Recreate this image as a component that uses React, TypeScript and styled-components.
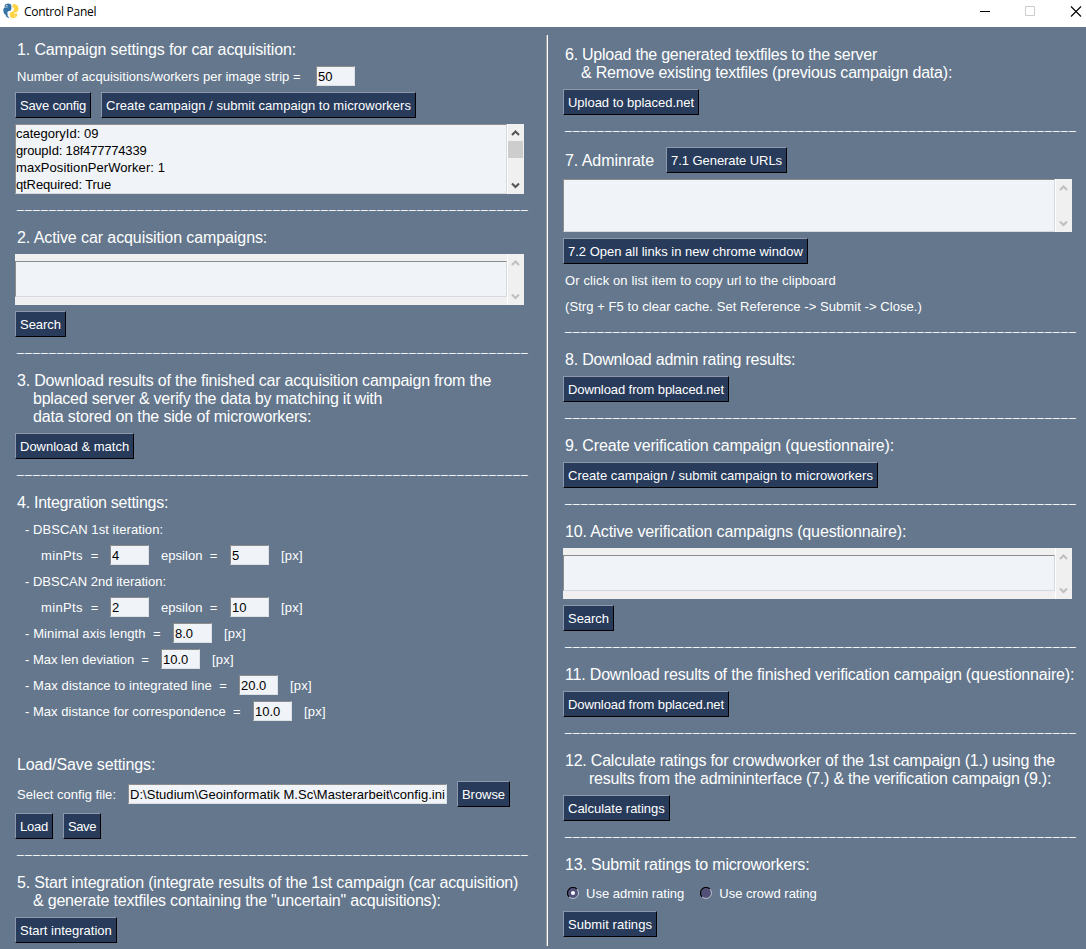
import type { ReactNode } from "react";
import styled, { createGlobalStyle } from "styled-components";

const GlobalStyle = createGlobalStyle`
  *, *::before, *::after { box-sizing: border-box; }
  body {
    margin: 0;
    overflow: hidden;
    font: 13px/16px "Liberation Sans", Arial, sans-serif;
    color: #fff;
    background: #64778d;
  }
`;

const Window = styled.div`
  display: flex;
  flex-direction: column;
  width: 1086px;
  height: 949px;
  background: #64778d;
`;

const TitleBar = styled.header`
  display: flex;
  align-items: flex-start;
  flex: none;
  height: 27px;
  padding: 3px 4px 0 3px;
  background: #fff;
  color: #000;
`;

const Title = styled.h1`
  flex: 1;
  margin: 0 0 0 5px;
  font: 400 12px/18px "Open Sans", "Noto Sans", sans-serif;
  letter-spacing: -0.26px;
`;

const WindowControls = styled.div`
  display: flex;
  gap: 35px;
  padding-top: 3px;
`;

const Body = styled.main`
  display: flex;
  flex: 1;
  align-items: flex-start;
  padding-left: 15px;
`;

const LeftColumn = styled.div`
  width: 531px;
  padding-top: 13px;
`;

const Divider = styled.div`
  width: 2px;
  height: 911px;
  margin-top: 8px;
  border-left: 1px solid #a0a0a0;
  background: #fff;
`;

const RightColumn = styled.div`
  flex: 1;
  padding: 18px 0 0 15px;
`;

const Tracked = styled.span<{ $track?: number }>`
  letter-spacing: ${(p) => p.$track ?? 0}px;
  white-space: pre;
`;

const Heading = styled.h2<{ $inline?: boolean }>`
  display: flex;
  flex-direction: column;
  margin: ${(p) => (p.$inline ? "0" : "0 0 7px")};
  padding: ${(p) => (p.$inline ? "2px" : "1px")} 0 0 2px;
  font-size: 16px;
  font-weight: 400;
  line-height: 18px;
`;

const HeadingLine = styled(Tracked)<{ $indent?: number }>`
  padding-left: ${(p) => p.$indent ?? 0}px;
`;

const Row = styled.div<{ $gap?: number; $mt?: number; $mb?: number; $h?: number }>`
  display: flex;
  align-items: center;
  gap: ${(p) => p.$gap ?? 10}px;
  height: ${(p) => p.$h ?? 26}px;
  margin-top: ${(p) => p.$mt ?? 0}px;
  margin-bottom: ${(p) => p.$mb ?? 0}px;
`;

const FieldRow = styled(Row)<{ $indent: number }>`
  gap: 12px;
  padding-left: ${(p) => p.$indent}px;
`;

const Label = styled(Tracked)<{ $w?: number }>`
  width: ${(p) => (p.$w ? `${p.$w}px` : "auto")};
  padding-top: 2px;
`;

const Field = styled.input<{ $w?: number; $track?: number }>`
  width: ${(p) => p.$w ?? 39}px;
  height: 20px;
  padding: 0 0 0 1px;
  border: 1px solid;
  border-color: #8c8c8c #dde1e6 #dde1e6 #8c8c8c;
  border-radius: 0;
  outline: none;
  background: #f0f3f7;
  color: #000;
  font: 13px/16px "Liberation Sans", Arial, sans-serif;
  letter-spacing: ${(p) => p.$track ?? 0}px;
`;

const PushButton = styled.button<{ $w: number; $track?: number }>`
  display: block;
  flex: none;
  width: ${(p) => p.$w}px;
  height: 26px;
  padding: 2px 0 0 4px;
  border: 1px solid;
  border-color: #8d99ab #000 #000 #8d99ab;
  border-radius: 0;
  background: #283b5b;
  color: #fff;
  font: 13px/16px "Liberation Sans", Arial, sans-serif;
  letter-spacing: ${(p) => p.$track ?? 0}px;
  text-align: left;
  white-space: nowrap;
`;

const Rule = styled.div`
  height: 34px;
  padding: 2px 0 0 2px;
  overflow: hidden;
  font-size: 12px;
  line-height: 16px;
  letter-spacing: 1.326px;
  white-space: nowrap;
`;

const ListFrame = styled.div<{ $h: number; $mb: number }>`
  display: flex;
  width: 509px;
  height: ${(p) => p.$h}px;
  margin-bottom: ${(p) => p.$mb}px;
  background: #f0f0f0;
`;

const ListItems = styled.ul<{ $inset?: boolean }>`
  display: flex;
  flex-direction: column;
  flex: 1;
  margin: ${(p) => (p.$inset ? "7px 0 8px" : "0")};
  padding: 0;
  border: 1px solid;
  border-color: #8c8c8c #d6dae0 #d6dae0 #8c8c8c;
  background: #f0f3f7;
  color: #000;
  line-height: 17px;
  list-style: none;
`;

const ScrollTrack = styled.div`
  display: flex;
  flex-direction: column;
  align-items: center;
  justify-content: space-between;
  width: 17px;
  padding: 6px 1px 5px 0;
  border-left: 1px solid #fff;
`;

const ScrollThumb = styled.div`
  width: 15px;
  height: 17px;
  margin: 4px 0 auto;
  background: #cdcdcd;
`;

const Notes = styled.div`
  display: flex;
  flex-direction: column;
  gap: 8px;
  padding: 7px 0 1px 2px;
`;

const RadioLabel = styled.label`
  display: flex;
  align-items: center;
  gap: 7px;
`;

const RadioRow = styled.div`
  display: flex;
  gap: 16px;
  padding: 3px 0 9px 4px;
`;

function Chevron({ down, active }: { down?: boolean; active?: boolean }) {
  return (
    <svg width="9" height="7" viewBox="0 0 9 7" fill="none">
      <path
        d={down ? "M1 1.4 4.5 4.9 8 1.4" : "M1 5.1 4.5 1.6 8 5.1"}
        stroke={active ? "#555" : "#bfbfbf"}
        strokeWidth="2.1"
      />
    </svg>
  );
}

function Radio({ checked }: { checked?: boolean }) {
  return (
    <svg width="12" height="12" viewBox="0 0 12 12">
      <circle cx="6" cy="6" r="5" fill="#525078" />
      <path d="M2.1 9.9A5.5 5.5 0 0 1 9.9 2.1" fill="none" stroke="#000" strokeWidth="1.2" />
      <path d="M9.9 2.1A5.5 5.5 0 0 1 2.1 9.9" fill="none" stroke="#b4bcc8" strokeWidth="1" />
      {checked && <circle cx="6" cy="6" r="2" fill="#fff" />}
    </svg>
  );
}

function Logo() {
  return (
    <svg width="16" height="16" viewBox="0 0 16 16">
      <path
        d="M2.6 1.2Q5 -.2 7.4 1.1Q8.6 2 8.4 4V6Q8.2 7.6 6.6 7.9L5.2 8.3Q4.2 8.7 4.2 10V12.2Q2 12.2 1 10.2Q-.1 7.7.6 5.4Q1.3 4.3 3 4.2H5V3.7H1.6Q1.4 2 2.6 1.2Z"
        fill="#3572a5"
      />
      <circle cx="3.8" cy="2.4" r=".6" fill="#fff" />
      <path
        d="M9.5 1.4Q12.5.3 14.4 2.6Q16 5 15.2 7.6Q14.6 8.9 12.9 9.2L10.8 9.8V10.5H14.4Q14.6 13.2 12.6 14.6Q10.2 15.8 7.8 14.4Q6.5 13.2 6.6 11.5Q6.6 9.4 8.3 8.9L9.8 8.4Q10.9 8 10.9 6.7V4.4H9.5Z"
        fill="#ffd342"
      />
      <path d="M4.2 9.5Q4 13 6.4 14.6Q3.2 15 2.7 12.5Z" fill="#3572a5" />
      <circle cx="11.6" cy="13" r=".6" fill="#fff" />
    </svg>
  );
}

const Separator = () => <Rule>{"_".repeat(64)}</Rule>;

function ListBox({
  height,
  gap = 6,
  inset,
  scrollable,
  children,
}: {
  height: number;
  gap?: number;
  inset?: boolean;
  scrollable?: boolean;
  children?: ReactNode;
}) {
  return (
    <ListFrame $h={height} $mb={gap}>
      <ListItems $inset={inset}>{children}</ListItems>
      <ScrollTrack>
        <Chevron active={scrollable} />
        {scrollable && <ScrollThumb />}
        <Chevron down active={scrollable} />
      </ScrollTrack>
    </ListFrame>
  );
}

interface Setting {
  label: string;
  labelWidth: number;
  track: number;
  value: string;
}

function SettingRow({ indent, fields }: { indent: number; fields: Setting[] }) {
  return (
    <FieldRow $indent={indent}>
      {fields.map((f) => (
        <FieldRow as="span" $indent={0} key={f.label}>
          <Label $w={f.labelWidth} $track={f.track}>{f.label}</Label>
          <Field defaultValue={f.value} />
        </FieldRow>
      ))}
      <Label $track={0.25}>[px]</Label>
    </FieldRow>
  );
}

const minPts = (value: string): Setting => ({ label: "minPts  =", labelWidth: 57, track: 0.36, value });
const epsilon = (value: string): Setting => ({ label: "epsilon  =", labelWidth: 57, track: 0.05, value });

export default function App() {
  return (
    <>
      <GlobalStyle />
      <Window>
        <TitleBar>
          <Logo />
          <Title>Control Panel</Title>
          <WindowControls>
            <svg width="10" height="11" viewBox="0 0 10 11"><path d="M0 5.5H10" stroke="#000" /></svg>
            <svg width="10" height="11" viewBox="0 0 10 11"><path d="M.5.5H9.5V9.5H.5Z" fill="none" stroke="#ccc" /></svg>
            <svg width="12" height="11" viewBox="0 0 12 11"><path d="M1 .5 11 10.5M11 .5 1 10.5" stroke="#000" strokeWidth="1.1" /></svg>
          </WindowControls>
        </TitleBar>
        <Body>
          <LeftColumn>
            <Heading><HeadingLine $track={-0.135}>1. Campaign settings for car acquisition:</HeadingLine></Heading>
            <FieldRow $indent={2} $h={20} $mb={6}>
              <Label $w={287} $track={0.03}>Number of acquisitions/workers per image strip =</Label>
              <Field defaultValue="50" />
            </FieldRow>
            <Row $mb={6}>
              <PushButton $w={76} $track={-0.17}>Save config</PushButton>
              <PushButton $w={315} $track={0.032}>Create campaign / submit campaign to microworkers</PushButton>
            </Row>
            <ListBox height={70} gap={0} scrollable>
              <Tracked as="li">categoryId: 09</Tracked>
              <Tracked as="li" $track={-0.189}>groupId: 18f477774339</Tracked>
              <Tracked as="li" $track={0.08}>maxPositionPerWorker: 1</Tracked>
              <Tracked as="li" $track={-0.115}>qtRequired: True</Tracked>
            </ListBox>
            <Separator />

            <Heading><HeadingLine $track={-0.09}>2. Active car acquisition campaigns:</HeadingLine></Heading>
            <ListBox height={51} inset />
            <PushButton $w={51} $track={-0.034}>Search</PushButton>
            <Separator />

            <Heading>
              <HeadingLine $track={-0.205}>3. Download results of the finished car acquisition campaign from the</HeadingLine>
              <HeadingLine $indent={16} $track={-0.23}>bplaced server &amp; verify the data by matching it with</HeadingLine>
              <HeadingLine $indent={16} $track={-0.16}>data stored on the side of microworkers:</HeadingLine>
            </Heading>
            <PushButton $w={119}>Download &amp; match</PushButton>
            <Separator />

            <Heading><HeadingLine $track={-0.265}>4. Integration settings:</HeadingLine></Heading>
            <Row $mt={-3}><FieldRow as="span" $indent={10}><Label $track={0.07}>- DBSCAN 1st iteration:</Label></FieldRow></Row>
            <SettingRow indent={26} fields={[minPts("4"), epsilon("5")]} />
            <Row><FieldRow as="span" $indent={10}><Label $track={0.01}>- DBSCAN 2nd iteration:</Label></FieldRow></Row>
            <SettingRow indent={26} fields={[minPts("2"), epsilon("10")]} />
            <SettingRow indent={10} fields={[{ label: "- Minimal axis length  =", labelWidth: 136, track: 0.1, value: "8.0" }]} />
            <SettingRow indent={10} fields={[{ label: "- Max len deviation  =", labelWidth: 124, track: 0.0, value: "10.0" }]} />
            <SettingRow indent={10} fields={[{ label: "- Max distance to integrated line  =", labelWidth: 202, track: 0.08, value: "20.0" }]} />
            <SettingRow indent={10} fields={[{ label: "- Max distance for correspondence  =", labelWidth: 216, track: 0.02, value: "10.0" }]} />

            <Row $h={31} />
            <Heading><HeadingLine $track={-0.12}>Load/Save settings:</HeadingLine></Heading>
            <Row $mb={6}>
              <FieldRow as="span" $indent={2}>
                <Label $w={99} $track={0.04}>Select config file:</Label>
                <Field $w={319} $track={0.04} defaultValue={"D:\\Studium\\Geoinformatik M.Sc\\Masterarbeit\\config.ini"} />
              </FieldRow>
              <PushButton $w={53} $track={-0.06}>Browse</PushButton>
            </Row>
            <Row>
              <PushButton $w={38} $track={-0.23}>Load</PushButton>
              <PushButton $w={38} $track={-0.41}>Save</PushButton>
            </Row>
            <Separator />

            <Heading>
              <HeadingLine $track={-0.19}>5. Start integration (integrate results of the 1st campaign (car acquisition)</HeadingLine>
              <HeadingLine $indent={16} $track={-0.205}>&amp; generate textfiles containing the "uncertain" acquisitions):</HeadingLine>
            </Heading>
            <PushButton $w={102}>Start integration</PushButton>
          </LeftColumn>

          <Divider />

          <RightColumn>
            <Heading>
              <HeadingLine $track={-0.25}>6. Upload the generated textfiles to the server</HeadingLine>
              <HeadingLine $indent={16} $track={-0.195}>&amp; Remove existing textfiles (previous campaign data):</HeadingLine>
            </Heading>
            <PushButton $w={136} $track={-0.023}>Upload to bplaced.net</PushButton>
            <Separator />

            <Row $mt={-2} $mb={6} $gap={12}>
              <Heading $inline><HeadingLine $track={-0.065}>7. Adminrate</HeadingLine></Heading>
              <PushButton $w={121} $track={-0.06}>7.1 Generate URLs</PushButton>
            </Row>
            <ListBox height={53} />
            <PushButton $w={245}>7.2 Open all links in new chrome window</PushButton>
            <Notes>
              <Label $track={0.115}>Or click on list item to copy url to the clipboard</Label>
              <Label $track={0.065}>{"(Strg + F5 to clear cache. Set Reference -> Submit -> Close.)"}</Label>
            </Notes>
            <Separator />

            <Heading><HeadingLine $track={-0.22}>8. Download admin rating results:</HeadingLine></Heading>
            <PushButton $w={166} $track={-0.091}>Download from bplaced.net</PushButton>
            <Separator />

            <Heading><HeadingLine $track={-0.148}>9. Create verification campaign (questionnaire):</HeadingLine></Heading>
            <PushButton $w={315} $track={0.032}>Create campaign / submit campaign to microworkers</PushButton>
            <Separator />

            <Heading><HeadingLine $track={-0.13}>10. Active verification campaigns (questionnaire):</HeadingLine></Heading>
            <ListBox height={51} inset />
            <PushButton $w={51} $track={-0.034}>Search</PushButton>
            <Separator />

            <Heading><HeadingLine $track={-0.18}>11. Download results of the finished verification campaign (questionnaire):</HeadingLine></Heading>
            <PushButton $w={166} $track={-0.091}>Download from bplaced.net</PushButton>
            <Separator />

            <Heading>
              <HeadingLine $track={-0.223}>12. Calculate ratings for crowdworker of the 1st campaign (1.) using the</HeadingLine>
              <HeadingLine $indent={24} $track={-0.22}>results from the admininterface (7.) &amp; the verification campaign (9.):</HeadingLine>
            </Heading>
            <PushButton $w={107}>Calculate ratings</PushButton>
            <Separator />

            <Heading><HeadingLine $track={-0.18}>13. Submit ratings to microworkers:</HeadingLine></Heading>
            <RadioRow>
              <RadioLabel><Radio checked /><Label $track={0}>Use admin rating</Label></RadioLabel>
              <RadioLabel><Radio /><Label $track={0}>Use crowd rating</Label></RadioLabel>
            </RadioRow>
            <PushButton $w={94} $track={0.065}>Submit ratings</PushButton>
          </RightColumn>
        </Body>
      </Window>
    </>
  );
}
